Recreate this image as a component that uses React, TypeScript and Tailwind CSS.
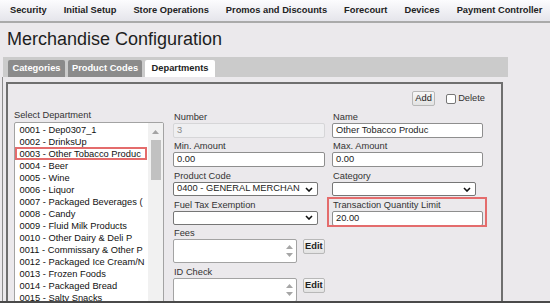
import React from 'react';

const navItems = ['Security', 'Initial Setup', 'Store Operations', 'Promos and Discounts', 'Forecourt', 'Devices', 'Payment Controller'];

const departments = [
  '0001 - Dep0307_1',
  '0002 - DrinksUp',
  '0003 - Other Tobacco Produc',
  '0004 - Beer',
  '0005 - Wine',
  '0006 - Liquor',
  '0007 - Packaged Beverages (',
  '0008 - Candy',
  '0009 - Fluid Milk Products',
  '0010 - Other Dairy & Deli P',
  '0011 - Commissary & Other P',
  '0012 - Packaged Ice Cream/N',
  '0013 - Frozen Foods',
  '0014 - Packaged Bread',
  '0015 - Salty Snacks',
  '0016 - Cookies & Crackers',
  '0017 - Other Snacks',
];

const Label = ({ children }: { children: React.ReactNode }) => (
  <div className="h-[12px] leading-[12px] pl-[1px] text-[9.3px] text-[#333] whitespace-nowrap">{children}</div>
);

const TextInput = ({ value, width, disabled = false }: { value: string; width: string; disabled?: boolean }) => (
  <div
    className={`${width} h-[15px] rounded-[2px] border pl-[3px] flex items-center text-[9.3px] leading-[11px] ${
      disabled ? 'bg-[#efeff1] border-[#d6d6d8] text-[#8a8a8a]' : 'bg-white border-[#8e8e8e] text-[#222]'
    }`}
  >
    {value}
  </div>
);

const Select = ({ value, width }: { value: string; width: string }) => (
  <div className={`${width} h-[14px] rounded-[2px] border border-[#767676] bg-white pl-[3px] pr-[4px] flex items-center justify-between text-[9.3px] text-[#222]`}>
    <span className="whitespace-nowrap overflow-hidden">{value}</span>
    <svg width="8" height="5" viewBox="0 0 8 5" className="shrink-0">
      <path d="M1 1 L4 4 L7 1" fill="none" stroke="#111" strokeWidth="1.6" />
    </svg>
  </div>
);

const TextAreaWithEdit = () => (
  <div className="flex items-start">
    <div className="w-[145px] h-[24px] rounded-[2px] border border-[#a3a3a3] bg-white flex justify-end">
      <div className="w-[13px] flex flex-col items-center justify-between py-[5px]">
        <svg width="7" height="4" viewBox="0 0 7 4"><path d="M0 4 L3.5 0 L7 4 Z" fill="#a6a6a6" /></svg>
        <svg width="7" height="4" viewBox="0 0 7 4"><path d="M0 0 L3.5 4 L7 0 Z" fill="#a6a6a6" /></svg>
      </div>
    </div>
    <button className="ml-[6px] w-[26px] h-[15px] rounded-[2px] border border-[#b8b8b8] bg-gradient-to-b from-[#f7f7f7] to-[#e3e3e3] text-[9.3px] font-bold text-[#222] leading-none">
      Edit
    </button>
  </div>
);

export default function App() {
  return (
    <div className="relative w-[550px] h-[303px] overflow-hidden bg-[#ebe9ec] border-b-2 border-[#4a4a4a] font-['Liberation_Sans',Arial,sans-serif]">
      {/* top menu */}
      <div className="h-[23px] border-b-2 border-[#aaaaaa] bg-gradient-to-b from-[#fcfcfe] to-[#e5e5eb] flex items-center gap-[17px] pl-[10px] text-[9.3px] font-bold text-[#222]">
        {navItems.map((n) => (
          <span key={n} className="whitespace-nowrap">{n}</span>
        ))}
      </div>

      <h1 className="mt-[6px] ml-[7px] text-[18px] leading-[21px] font-normal text-[#1e1e1e]">Merchandise Configuration</h1>

      {/* tabs */}
      <div className="mt-[7px] ml-[3px] w-[505px] h-[20px] bg-[#cbcbcb] flex items-end pl-[5px] gap-[3px] text-[9.3px] font-bold">
        <div className="w-[57px] h-[17px] rounded-t-[2px] bg-[#8b8b8b] text-white flex items-center justify-center">Categories</div>
        <div className="w-[74px] h-[17px] rounded-t-[2px] bg-[#8b8b8b] text-white flex items-center justify-center">Product Codes</div>
        <div className="w-[70px] h-[17px] rounded-t-[2px] bg-white text-[#222] flex items-center justify-center">Departments</div>
      </div>

      <div className="ml-[2px] w-[506px] h-[230px] border-l border-[#8c8c8c] pt-[5px] pl-[3px]">
        <div className="w-[497px] h-[240px] border-2 border-[#6f6f6f] bg-[#ebe9ec]">
          {/* add / delete */}
          <div className="flex justify-end items-center pt-[7px] pr-[16px]">
            <button className="w-[23px] h-[15px] rounded-[2px] border border-[#b8b8b8] bg-gradient-to-b from-[#f7f7f7] to-[#e3e3e3] text-[9.3px] text-[#222] leading-none">
              Add
            </button>
            <span className="ml-[11px] w-[10px] h-[10px] rounded-[2px] border border-[#767676] bg-white" />
            <span className="ml-[2px] text-[9.3px] text-[#333]">Delete</span>
          </div>

          <div className="flex items-start pl-[6px]">
            {/* department list */}
            <div className="w-[150px] pt-[2.5px]">
              <div className="h-[12px] leading-[12px] text-[9.3px] text-[#333]">Select Department</div>
              <div className="mt-[1px] h-[200px] rounded-[2px] border border-[#a3a3a3] bg-white flex overflow-hidden">
                <div className="flex-1 overflow-hidden pt-[1.5px]">
                  {departments.map((d) => (
                    <div key={d} className="relative h-[12px] leading-[12px] pl-[4.5px] text-[9.3px] text-[#111] whitespace-nowrap">
                      {d}
                      {d.startsWith('0003') && (
                        <span className="absolute left-0 right-[1px] -top-[1.5px] bottom-0 border-2 border-[#e46c6c]" />
                      )}
                    </div>
                  ))}
                </div>
                <div className="w-[15px] bg-[#f1f1f1] flex flex-col items-center pt-[7px]">
                  <svg width="7" height="4" viewBox="0 0 7 4"><path d="M0 4 L3.5 0 L7 4 Z" fill="#a3a3a3" /></svg>
                  <div className="mt-[6px] w-[10px] h-[40px] bg-[#c1c1c1]" />
                </div>
              </div>
            </div>

            {/* middle column */}
            <div className="ml-[9px] w-[152px] pt-[4.7px] flex flex-col gap-[2.7px]">
              <div>
                <Label>Number</Label>
                <TextInput value="3" width="w-[152px]" disabled />
              </div>
              <div>
                <Label>Min. Amount</Label>
                <TextInput value="0.00" width="w-[152px]" />
              </div>
              <div>
                <Label>Product Code</Label>
                <Select value="0400 - GENERAL MERCHAN" width="w-[145px]" />
              </div>
              <div>
                <Label>Fuel Tax Exemption</Label>
                <Select value="" width="w-[145px]" />
              </div>
              <div>
                <Label>Fees</Label>
                <TextAreaWithEdit />
              </div>
              <div>
                <Label>ID Check</Label>
                <TextAreaWithEdit />
              </div>
            </div>

            {/* right column */}
            <div className="ml-[7px] w-[151px] pt-[4.7px] flex flex-col gap-[2.7px]">
              <div>
                <Label>Name</Label>
                <TextInput value="Other Tobacco Produc" width="w-[151px]" />
              </div>
              <div>
                <Label>Max. Amount</Label>
                <TextInput value="0.00" width="w-[151px]" />
              </div>
              <div>
                <Label>Category</Label>
                <Select value="" width="w-[144px]" />
              </div>
              <div className="relative">
                <Label>Transaction Quantity Limit</Label>
                <TextInput value="20.00" width="w-[151px]" />
                <span className="absolute -left-[5px] -right-[4px] -top-[2px] -bottom-[1px] border-2 border-[#e46c6c]" />
              </div>
            </div>
          </div>
        </div>
      </div>
    </div>
  );
}
